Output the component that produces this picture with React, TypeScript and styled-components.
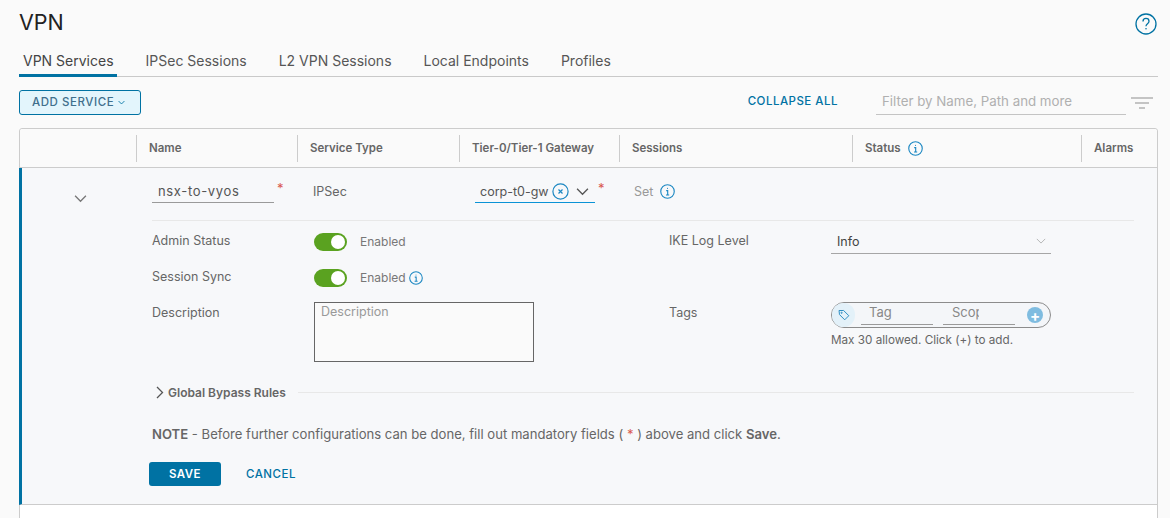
import React from 'react'
import styled, { createGlobalStyle } from 'styled-components'

const BLUE = '#0072a3'
const TEXT = '#666'

const InfoIcon = ({ size = 14, color = '#1b87c2' }: { size?: number; color?: string }) => (
  <svg width={size} height={size} viewBox="0 0 16 16" fill="none" stroke={color} strokeWidth="1.2">
    <circle cx="8" cy="8" r="7.2" />
    <circle cx="8" cy="4.6" r="0.6" fill={color} stroke="none" />
    <path d="M6.6 7h1.6v4.6M6.4 11.7h3.4" />
  </svg>
)

const Chevron = ({ size = 12, color = '#666', width = 1.2 }: { size?: number; color?: string; width?: number }) => (
  <svg width={size} height={size} viewBox="0 0 12 12" fill="none" stroke={color} strokeWidth={width}>
    <path d="M1 3.5l5 5 5-5" />
  </svg>
)

const App = () => (
  <Page>
    <GlobalStyle />
    <TitleRow>
      <Title>VPN</Title>
      <HelpIcon width="22" height="22" viewBox="0 0 22 22" fill="none" stroke={BLUE} strokeWidth="1.3">
        <circle cx="11" cy="11" r="10" />
        <path d="M8 8.4c0-1.9 1.4-3 3-3s3 1.1 3 2.8c0 2.4-3 2.5-3 5" />
        <circle cx="11" cy="15.8" r="0.8" fill={BLUE} stroke="none" />
      </HelpIcon>
    </TitleRow>
    <Tabs>
      <Tab $active>VPN Services</Tab>
      <Tab>IPSec Sessions</Tab>
      <Tab>L2 VPN Sessions</Tab>
      <Tab>Local Endpoints</Tab>
      <Tab>Profiles</Tab>
    </Tabs>
    <Toolbar>
      <AddButton>
        ADD SERVICE
        <Chevron size={7} color={BLUE} width={1.5} />
      </AddButton>
      <CollapseAll>COLLAPSE ALL</CollapseAll>
      <Filter>Filter by Name, Path and more</Filter>
      <FilterIcon width="22" height="12" viewBox="0 0 22 12" stroke="#b3b3b3" strokeWidth="1.6">
        <path d="M0 1h22M4 6h14M8 11h6" />
      </FilterIcon>
    </Toolbar>
    <Table>
      <HeaderRow>
        <HeaderCell />
        <HeaderCell>Name</HeaderCell>
        <HeaderCell>Service Type</HeaderCell>
        <HeaderCell>Tier-0/Tier-1 Gateway</HeaderCell>
        <HeaderCell>Sessions</HeaderCell>
        <HeaderCell>
          Status
          <InfoIcon size={15} />
        </HeaderCell>
        <HeaderCell>Alarms</HeaderCell>
      </HeaderRow>
      <ExpandedRow>
        <RowHead>
          <ExpandCell>
            <Chevron size={13} color="#777" />
          </ExpandCell>
          <NameInput>nsx-to-vyos</NameInput>
          <Required>*</Required>
          <TypeCell>IPSec</TypeCell>
          <GatewayInput>
            corp-t0-gw
            <ClearIcon width="17" height="17" viewBox="0 0 17 17" fill="none" stroke="#1b87c2" strokeWidth="1.2">
              <circle cx="8.5" cy="8.5" r="7.6" />
              <path d="M6.5 6.5l4 4M10.5 6.5l-4 4" />
            </ClearIcon>
            <Chevron size={13} color="#555" />
          </GatewayInput>
          <Required>*</Required>
          <SetCell>
            Set
            <InfoIcon size={15} />
          </SetCell>
        </RowHead>
        <Details>
          <FormGrid>
            <Label>Admin Status</Label>
            <Value>
              <Toggle />
              Enabled
            </Value>
            <Label>IKE Log Level</Label>
            <SelectBox>
              Info
              <Chevron size={10} color="#aaa" width={1} />
            </SelectBox>
            <Label>Session Sync</Label>
            <Value>
              <Toggle />
              Enabled
              <SyncInfo>
                <InfoIcon size={14} />
              </SyncInfo>
            </Value>
            <span />
            <span />
            <Label>Description</Label>
            <TextArea>Description</TextArea>
            <Label>Tags</Label>
            <TagColumn>
              <TagPill>
                <TagBadge>
                  <svg width="12" height="12" viewBox="0 0 12 12" fill="none" stroke="#2f8fc4" strokeWidth="1">
                    <path d="M1 1.5h4.6l5.2 5.2-4.1 4.1L1.5 5.6z" />
                    <circle cx="3.6" cy="3.8" r="0.6" />
                  </svg>
                </TagBadge>
                <TagField>Tag</TagField>
                <TagField $second>
                  <ClippedText>Scope</ClippedText>
                </TagField>
                <AddTag>+</AddTag>
              </TagPill>
              <TagHint>Max 30 allowed. Click (+) to add.</TagHint>
            </TagColumn>
          </FormGrid>
          <Bypass>
            <svg width="10" height="13" viewBox="0 0 10 13" fill="none" stroke="#555" strokeWidth="1.3">
              <path d="M2 1l5.5 5.5L2 12" />
            </svg>
            <BypassLabel>Global Bypass Rules</BypassLabel>
            <BypassLine />
          </Bypass>
          <Note>
            <b>NOTE</b> - Before further configurations can be done, fill out mandatory fields ( <NoteStar>*</NoteStar> ) above and click <b>Save</b>.
          </Note>
          <Actions>
            <SaveButton>SAVE</SaveButton>
            <CancelButton>CANCEL</CancelButton>
          </Actions>
        </Details>
      </ExpandedRow>
      <EmptyRow />
    </Table>
  </Page>
)
export default App

const GlobalStyle = createGlobalStyle`
  html, body {
    margin: 0;
    padding: 0;
    background: #fafafa;
  }
  * {
    box-sizing: border-box;
  }
`

const Page = styled.div`
  width: 1170px;
  height: 518px;
  overflow: hidden;
  padding: 0 12px 0 19px;
  font-family: 'Inter', 'Liberation Sans', sans-serif;
  color: ${TEXT};
`

const TitleRow = styled.div`
  display: flex;
  justify-content: space-between;
  align-items: center;
  height: 44px;
`

const Title = styled.h1`
  margin: 0;
  font-size: 21.5px;
  font-weight: 400;
  color: #222;
`

const HelpIcon = styled.svg`
  margin-right: 1px;
  margin-top: 4px;
`

const Tabs = styled.div`
  display: flex;
  gap: 25px;
  height: 33px;
  border-bottom: 1px solid #c9c9c9;
`

const Tab = styled.div<{ $active?: boolean }>`
  height: 33px;
  padding: 8px 3px 0 4px;
  font-size: 14px;
  color: ${p => (p.$active ? '#444' : '#565656')};
  border-bottom: 3px solid ${p => (p.$active ? BLUE : 'transparent')};
`

const Toolbar = styled.div`
  display: flex;
  align-items: center;
  height: 25px;
  margin-top: 13px;
`

const AddButton = styled.button`
  display: flex;
  align-items: center;
  gap: 4px;
  width: 122px;
  height: 25px;
  padding: 0 0 1px 12px;
  background: #e3f5fc;
  border: 1px solid ${BLUE};
  border-radius: 3px;
  font: 500 11.5px 'Inter', sans-serif;
  letter-spacing: 0.55px;
  color: #3f6f8c;
`

const CollapseAll = styled.a`
  margin: 0 0 3px auto;
  font-size: 11.5px;
  font-weight: 500;
  letter-spacing: 0.5px;
  color: ${BLUE};
`

const Filter = styled.div`
  width: 250px;
  height: 25px;
  margin-left: 38px;
  padding: 3px 0 0 6px;
  font-size: 13.3px;
  color: #b0b0b0;
  border-bottom: 1px solid #c4c4c4;
`

const FilterIcon = styled.svg`
  margin: 0 5px 0 5px;
`

const Table = styled.div`
  margin-top: 13px;
  height: 400px;
  background: #fff;
  border: 1px solid #ccc;
  border-radius: 3px 3px 0 0;
`

const columns = '116px 161px 162px 160px 233px 229px 1fr'

const HeaderRow = styled.div`
  display: grid;
  grid-template-columns: ${columns};
  height: 39px;
  padding-top: 6px;
  background: #fafafa;
  border-bottom: 1px solid #ccc;
  border-radius: 3px 3px 0 0;
`

const HeaderCell = styled.div`
  display: flex;
  align-items: center;
  gap: 7px;
  height: 27px;
  padding: 0 0 1px 12px;
  font-size: 11.5px;
  font-weight: 600;
  color: #666;
  border-left: 1px solid #ccc;

  &:first-child {
    border-left: 0;
  }
`

const ExpandedRow = styled.div`
  height: 337px;
  background: #f7f8fa;
  border-left: 3px solid ${BLUE};
  border-bottom: 1px solid #ccc;
  margin-left: -1px;
  padding-top: 13px;
`

const RowHead = styled.div`
  display: flex;
  align-items: flex-start;
  height: 39px;
`

const ExpandCell = styled.div`
  width: 130px;
  padding: 8px 0 0 52px;
`

const NameInput = styled.div`
  width: 122px;
  height: 22px;
  padding: 2px 0 0 6px;
  font-size: 13px;
  letter-spacing: 0.65px;
  color: #555;
  border-bottom: 1px solid #9a9a9a;
`

const Required = styled.span`
  position: relative;
  left: 3px;
  top: 1px;
  width: 0;
  font-size: 13px;
  line-height: 1;
  color: #d9574f;
`

const TypeCell = styled.div`
  width: 201px;
  padding: 3px 0 0 39px;
  font-size: 12.5px;
  color: ${TEXT};
`

const GatewayInput = styled.div`
  display: flex;
  align-items: center;
  width: 120px;
  height: 22px;
  padding-left: 5px;
  font-size: 12.5px;
  color: #555;
  border-bottom: 1px solid #0a93d6;
`

const ClearIcon = styled.svg`
  margin: 0 7px 0 3px;
  flex: none;
`

const SetCell = styled.div`
  display: flex;
  align-items: center;
  gap: 7px;
  padding: 3px 0 0 39px;
  font-size: 12.5px;
  color: #999;
`

const Details = styled.div`
  margin-left: 130px;
  width: 982px;
`

const FormGrid = styled.div`
  display: grid;
  grid-template-columns: 162px 355px 162px 220px;
  grid-template-rows: 36px 36px auto;
  padding-top: 9px;
  border-top: 1px solid #e8e8e8;
`

const Label = styled.div`
  padding-top: 3px;
  font-size: 12.5px;
  color: #666;
`

const Value = styled.div`
  display: flex;
  align-items: flex-start;
  padding-top: 3px;
  font-size: 12px;
  line-height: 18px;
  color: #777;
`

const Toggle = styled.span`
  position: relative;
  width: 33px;
  height: 18px;
  margin-right: 13px;
  border-radius: 9px;
  background: #5aa220;

  &::after {
    content: '';
    position: absolute;
    top: 2px;
    right: 2px;
    width: 14px;
    height: 14px;
    border-radius: 50%;
    background: #fff;
  }
`

const SyncInfo = styled.span`
  display: inline-flex;
  margin: 2px 0 0 3px;
`

const SelectBox = styled.div`
  display: flex;
  align-items: center;
  justify-content: space-between;
  width: 220px;
  height: 24px;
  padding: 0 5px 1px 6px;
  font-size: 12.5px;
  color: #444;
  border-bottom: 1px solid #a6a6a6;
`

const TextArea = styled.div`
  width: 220px;
  height: 60px;
  padding: 1px 6px;
  font-size: 12.5px;
  color: #999;
  background: #fafafa;
  border: 1px solid #666;
`

const TagColumn = styled.div`
  display: flex;
  flex-direction: column;
`

const TagPill = styled.div`
  display: flex;
  align-items: center;
  width: 220px;
  height: 26px;
  border: 1px solid #8c8c8c;
  border-radius: 13px;
  background: #f4f6f9;
`

const TagBadge = styled.span`
  display: flex;
  align-items: center;
  justify-content: center;
  width: 23px;
  height: 24px;
  border-radius: 12px;
  background: #e3f1f9;
`

const TagField = styled.span<{ $second?: boolean }>`
  width: 72px;
  height: 20px;
  margin: 0 ${p => (p.$second ? '12px' : '10px')} 0 ${p => (p.$second ? '0' : '6px')};
  padding: 0 0 0 ${p => (p.$second ? '9px' : '8px')};
  font-size: 13px;
  line-height: 15px;
  color: #888;
  border-bottom: 1px solid #9a9a9a;
`

const ClippedText = styled.span`
  display: block;
  width: 27px;
  overflow: hidden;
`

const AddTag = styled.span`
  display: flex;
  align-items: center;
  justify-content: center;
  width: 16px;
  height: 16px;
  border-radius: 50%;
  background: #7fbce0;
  color: #fff;
  font-size: 15px;
  font-weight: 700;
  line-height: 1;
`

const TagHint = styled.div`
  margin-top: 5px;
  font-size: 11.7px;
  color: #666;
`

const Bypass = styled.div`
  display: flex;
  align-items: center;
  height: 16px;
  margin-top: 22px;
  padding-left: 3px;
`

const BypassLabel = styled.span`
  margin: 0 12px 0 3px;
  font-size: 12px;
  font-weight: 600;
  color: #666;
`

const BypassLine = styled.span`
  flex: 1;
  height: 1px;
  background: #e8e8e8;
`

const Note = styled.div`
  margin-top: 26px;
  font-size: 13.1px;
  color: #666;

  b {
    font-weight: 600;
  }
`

const NoteStar = styled.span`
  color: #d9574f;
`

const Actions = styled.div`
  display: flex;
  align-items: center;
  margin: 20px 0 0 -3px;
`

const SaveButton = styled.button`
  width: 72px;
  height: 24px;
  padding: 0;
  background: ${BLUE};
  color: #fff;
  border: 0;
  border-radius: 3px;
  font: 600 11.5px 'Inter', sans-serif;
  letter-spacing: 0.5px;
`

const CancelButton = styled.button`
  margin-left: 25px;
  padding: 0;
  background: none;
  border: 0;
  color: ${BLUE};
  font: 500 11.5px 'Inter', sans-serif;
  letter-spacing: 0.5px;
`

const EmptyRow = styled.div`
  height: 20px;
  background: #fff;
`
